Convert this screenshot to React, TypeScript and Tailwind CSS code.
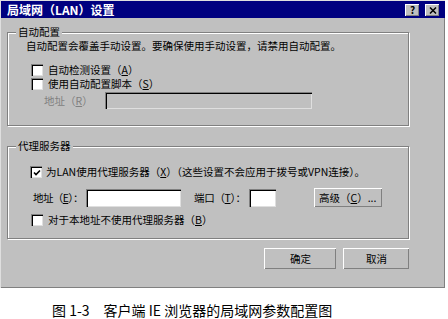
import React from 'react';

const font = { fontFamily: '"Noto Sans CJK SC", "Liberation Sans", sans-serif' };

const Checkbox: React.FC<{ checked?: boolean }> = ({ checked }) => (
  <span className="flex h-[12px] w-[12px] shrink-0 items-center justify-center border-t border-l border-[#808080] border-r-white border-b-white bg-white shadow-[inset_1px_1px_0_#000,inset_-1px_-1px_0_#dfdfdf]">
    {checked && (
      <svg width="8" height="8" viewBox="0 0 8 8">
        <path d="M1 3.5 L3 5.5 L7 1.5" fill="none" stroke="#000" strokeWidth="1.6" />
      </svg>
    )}
  </span>
);

const Key: React.FC<{ k: string }> = ({ k }) => (
  <>
    （<span className="underline underline-offset-1">{k}</span>）
  </>
);

const sunken =
  'border-t border-l border-[#808080] border-r-white border-b-white shadow-[inset_1px_1px_0_#000,inset_-1px_-1px_0_#dfdfdf]';
const raised =
  'border-t border-l border-white border-r-black border-b-black shadow-[inset_-1px_-1px_0_#808080]';
const group =
  'border border-[#808080] shadow-[inset_1px_1px_0_#fff,1px_1px_0_#fff] p-0 m-0';

export default function App() {
  return (
    <div className="h-[319px] w-[448px] bg-white text-[10.5px] leading-[12px] text-black" style={font}>
      <div className="flex h-[288px] w-[445px] flex-col border-t border-l border-[#dfdfdf] border-r-[#404040] border-b-[#404040] bg-[#c0c0c0] shadow-[inset_-1px_-1px_0_#808080]">
        {/* title bar */}
        <div className="flex h-[17px] items-center justify-between bg-[#000080] pl-[6px] pr-[6px]">
          <span className="text-[12px] font-bold text-white">局域网（LAN）设置</span>
          <div className="flex gap-[6px]">
            <span className={`flex h-[12px] w-[14px] items-center justify-center bg-[#c0c0c0] text-[10px] font-bold leading-none ${raised}`}>?</span>
            <span className={`flex h-[12px] w-[14px] items-center justify-center bg-[#c0c0c0] ${raised}`}>
              <svg width="8" height="7" viewBox="0 0 8 7">
                <path d="M1 0.5 L7 6.5 M7 0.5 L1 6.5" stroke="#000" strokeWidth="1.5" />
              </svg>
            </span>
          </div>
        </div>

        <div className="flex flex-col pl-[6px]">
          {/* automatic configuration */}
          <fieldset className={`mt-[8px] h-[100px] w-[402px] ${group}`}>
            <legend className="ml-[8px] bg-[#c0c0c0] px-[2px] leading-[12px]">自动配置</legend>
            <p className="mt-[2px] pl-[18px]">自动配置会覆盖手动设置。要确保使用手动设置，请禁用自动配置。</p>
            <label className="mt-[12px] flex items-center gap-[5px] pl-[23px]">
              <Checkbox />
              <span>自动检测设置<Key k="A" /></span>
            </label>
            <label className="mt-[2px] flex items-center gap-[5px] pl-[23px]">
              <Checkbox />
              <span>使用自动配置脚本<Key k="S" /></span>
            </label>
            <div className="mt-[2px] flex items-center pl-[36px]">
              <span className="w-[61px] whitespace-nowrap text-[#808080]">地址<Key k="R" /></span>
              <div className={`h-[17px] w-[207px] bg-[#c0c0c0] ${sunken}`} />
            </div>
          </fieldset>

          {/* proxy server */}
          <fieldset className={`mt-[14px] h-[99px] w-[402px] ${group}`}>
            <legend className="ml-[8px] bg-[#c0c0c0] px-[2px] leading-[12px]">代理服务器</legend>
            <label className="mt-[14px] flex items-center gap-[4px] pl-[22px]">
              <Checkbox checked />
              <span>为LAN使用代理服务器<Key k="X" />（这些设置不会应用于拨号或VPN连接）。</span>
            </label>
            <div className="mt-[10px] flex items-center pl-[25px]">
              <span className="w-[53px] shrink-0 whitespace-nowrap tracking-[-0.6px]">地址<Key k="E" />：</span>
              <div className={`h-[18px] w-[95px] shrink-0 bg-white ${sunken}`} />
              <span className="ml-[13px] w-[55px] shrink-0 whitespace-nowrap tracking-[-0.3px]">端口<Key k="T" />：</span>
              <div className={`h-[18px] w-[27px] shrink-0 bg-white ${sunken}`} />
              <button className={`ml-[38px] flex h-[19px] w-[68px] shrink-0 items-center whitespace-nowrap pl-[4px] ${raised}`}>
                高级<Key k="C" />...
              </button>
            </div>
            <label className="mt-[7px] flex items-center gap-[5px] pl-[23px]">
              <Checkbox />
              <span>对于本地址不使用代理服务器<Key k="B" /></span>
            </label>
          </fieldset>

          <div className="mt-[9px] flex w-[402px] justify-end gap-[7px]">
            <button className={`h-[21px] w-[72px] ${raised}`}>确定</button>
            <button className={`h-[21px] w-[66px] ${raised}`}>取消</button>
          </div>
        </div>
      </div>

      <p className="mt-[15px] whitespace-nowrap pl-[52px] text-[14px] leading-[14px]">
        图 1-3　客户端 IE 浏览器的局域网参数配置图
      </p>
    </div>
  );
}
